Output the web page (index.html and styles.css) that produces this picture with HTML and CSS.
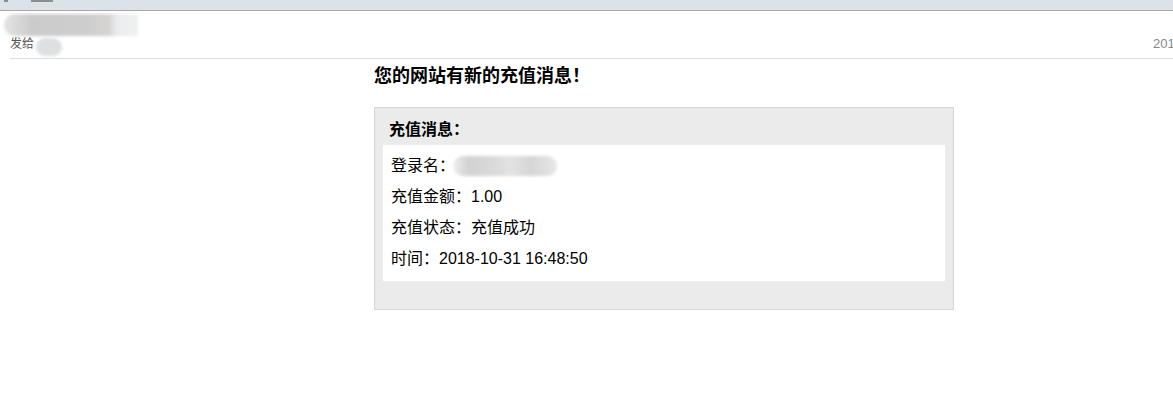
FILE: index.html
```html
<!DOCTYPE html>
<html lang="zh-CN">
<head>
<meta charset="utf-8">
<title>充值消息</title>
<link rel="stylesheet" href="styles.css">
</head>
<body>
<div class="topbar"><span class="tb-mark m1"></span><span class="tb-mark m2"></span></div>
<div class="mailhead">
  <div class="sender"><div class="blur-name"></div></div>
  <div class="to-row">
    <span class="to-label">发给<span class="blur-dot"></span></span>
    <span class="date">2018-10-31 16:48</span>
  </div>
</div>
<main class="content">
  <h1 class="title">您的网站有新的充值消息！</h1>
  <section class="box">
    <h2 class="box-title">充值消息：</h2>
    <div class="box-body">
      <p class="row">登录名：<span class="blur-login"></span></p>
      <p class="row">充值金额：1.00</p>
      <p class="row">充值状态：充值成功</p>
      <p class="row">时间：2018-10-31 16:48:50</p>
    </div>
  </section>
</main>
</body>
</html>
```

FILE: styles.css
```css
html, body {
  margin: 0;
  padding: 0;
  overflow: hidden;
  background: #fff;
}
body {
  font-family: "Liberation Sans", "Noto Sans CJK SC", sans-serif;
  color: #000;
}
.topbar {
  height: 10px;
  background: #dbe2e8;
  border-bottom: 1px solid #a4a9ad;
  display: flex;
  align-items: flex-start;
}
.tb-mark {
  height: 2px;
  background: #8a8f94;
}
.m1 { width: 4px; margin-left: 4px; }
.m2 { width: 22px; margin-left: 23px; }
.mailhead {
  margin-left: 10px;
  padding-bottom: 5px;
  border-bottom: 1px solid #dcdcdc;
}
.sender {
  height: 24px;
  padding-top: 3px;
  box-sizing: border-box;
}
.blur-name {
  margin-left: -6px;
  width: 134px;
  height: 22px;
  border-radius: 11px 2px 2px 11px;
  background: linear-gradient(90deg, #e2e3e3 0, #d6d6d6 12%, #cbcbcb 20%, #cdcdcd 60%, #d5d4d2 78%, #ecedee 85%, #eff0f0 100%);
  filter: blur(1.5px);
}
.to-row {
  display: flex;
  height: 18px;
  line-height: 18px;
  font-size: 12px;
  color: #555;
}
.to-label {
  display: flex;
  align-items: center;
}
.blur-dot {
  display: inline-block;
  width: 26px;
  height: 18px;
  margin-left: 2px;
  margin-top: 6px;
  border-radius: 9px;
  background: #dedfe0;
  filter: blur(1.5px);
}
.date {
  margin-left: auto;
  width: 20px;
  flex-shrink: 0;
  white-space: nowrap;
  font-size: 13px;
  color: #888;
}
.content {
  padding-left: 374px;
  width: 580px;
}
.title {
  margin: 5px 0 19px;
  font-size: 18px;
  line-height: 24px;
  font-weight: bold;
}
.box {
  border: 1px solid #d6d6d6;
  background: #ebebeb;
  padding: 12px 8px 28px;
}
.box-title {
  margin: 0 0 5px 6px;
  font-size: 16px;
  line-height: 20px;
  font-weight: bold;
}
.box-body {
  background: #fff;
  padding: 5px 8px 7px;
}
.row {
  margin: 0;
  font-size: 16px;
  line-height: 31px;
  display: flex;
  align-items: center;
}
.blur-login {
  display: inline-block;
  width: 104px;
  height: 20px;
  margin-left: -2px;
  border-radius: 10px;
  background: linear-gradient(90deg, #eeeeee 0, #d2d2d2 15%, #dadada 40%, #e2e2e2 55%, #d6d6d6 75%, #e6e6e6 100%);
  filter: blur(1.5px);
}
```
